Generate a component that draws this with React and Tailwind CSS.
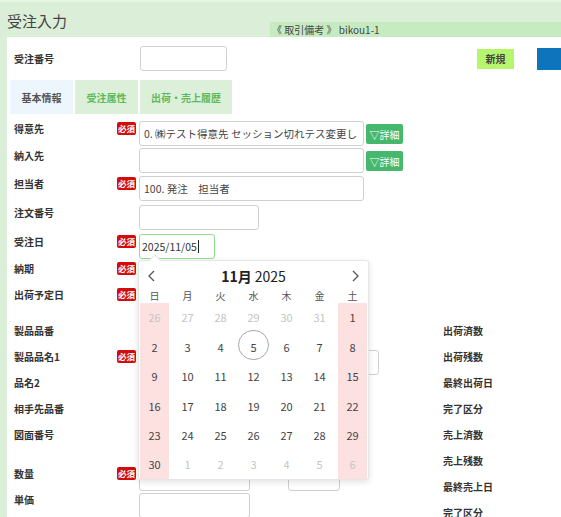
import React from "react";

const FONT = "[font-family:'Noto_Sans_CJK_JP','Noto_Sans',sans-serif]";

const weeks = [
  [26, 27, 28, 29, 30, 31, 1],
  [2, 3, 4, 5, 6, 7, 8],
  [9, 10, 11, 12, 13, 14, 15],
  [16, 17, 18, 19, 20, 21, 22],
  [23, 24, 25, 26, 27, 28, 29],
  [30, 1, 2, 3, 4, 5, 6],
];

function Badge() {
  return (
    <span className="mt-[1px] flex h-[13px] w-[19px] items-center justify-center rounded-[2px] bg-[#d30b0b] text-[8.5px] font-bold leading-none text-white">
      必須
    </span>
  );
}

function Label({ children }) {
  return <div className="text-[10px] font-bold leading-[16px] text-[#333]">{children}</div>;
}

function Row({ label, req, h, children }) {
  return (
    <div className={`flex items-start pl-[7px] ${h}`}>
      <div className="w-[103px] shrink-0">
        <Label>{label}</Label>
      </div>
      <div className="w-[22px] shrink-0">{req && <Badge />}</div>
      {children}
    </div>
  );
}

function Input({ w, value, className = "" }) {
  return (
    <div
      className={`flex h-[25px] shrink-0 items-center overflow-hidden whitespace-nowrap rounded-[3px] border border-[#d0d0d0] bg-white px-[4px] text-[10.5px] text-[#444] ${w} ${className}`}
    >
      {value}
    </div>
  );
}

function DetailButton() {
  return (
    <button className="ml-[2px] mt-[3px] flex h-[20px] w-[37px] items-center justify-center rounded-[2px] bg-[#45b86e] text-[10px] text-white">
      ▽詳細
    </button>
  );
}

function Chevron({ dir }) {
  return (
    <svg width="10" height="12" viewBox="0 0 10 12" fill="none" stroke="#555" strokeWidth="1.3">
      {dir === "left" ? <polyline points="7,1 2,6 7,11" /> : <polyline points="3,1 8,6 3,11" />}
    </svg>
  );
}

function Calendar() {
  return (
    <div className="absolute left-[-1px] top-[26px] z-10 w-[231px] rounded-[3px] border border-[#e6e6e6] bg-white pt-[4px] shadow-[0_2px_6px_rgba(0,0,0,0.12)]">
      <div className="absolute left-[12px] top-[-5px] h-[8px] w-[8px] rotate-45 border-l border-t border-[#e6e6e6] bg-white" />
      <div className="flex h-[22px] items-center justify-between px-[8px]">
        <Chevron dir="left" />
        <div className="text-[14px] leading-none text-[#222]">
          <span className="font-bold">11月</span> 2025
        </div>
        <Chevron dir="right" />
      </div>
      <div className="grid h-[16px] grid-cols-[repeat(7,29px)] gap-x-[4px] pl-[1px] text-[10px] text-[#555]">
        {["日", "月", "火", "水", "木", "金", "土"].map((d) => (
          <div key={d} className="flex items-center justify-center">
            {d}
          </div>
        ))}
      </div>
      <div className="grid grid-cols-[repeat(7,29px)] gap-x-[4px] pl-[1px]">
        {weeks.map((week, wi) =>
          week.map((d, di) => {
            const other = (wi === 0 && di < 6) || (wi === 5 && di > 0);
            const weekend = di === 0 || di === 6;
            const today = wi === 1 && di === 3;
            return (
              <div
                key={`${wi}-${di}`}
                className={`relative flex h-[29.4px] items-center justify-center text-[11px] ${
                  weekend ? "bg-[#fde1e1]" : ""
                } ${other ? "text-[#c4c4c4]" : "text-[#444]"}`}
              >
                {today && (
                  <span className="absolute left-[-1.5px] top-[-2px] h-[30px] w-[31px] rounded-full border border-[#a8a8a8]" />
                )}
                <span className="relative">{d}</span>
              </div>
            );
          })
        )}
      </div>
    </div>
  );
}

const rightLabels = ["出荷済数", "出荷残数", "最終出荷日", "完了区分", "売上済数", "売上残数", "最終売上日", "完了区分"];

export default function App() {
  return (
    <div className={`h-[517px] w-[561px] overflow-hidden bg-[#dbefd8] ${FONT}`}>
      <div className="flex h-[37px] items-end border-t-2 border-[#e7f5e5]">
        <div className="w-[270px] shrink-0 self-start pl-[7px] pt-[9px] text-[15px] leading-[20px] text-[#444]">
          受注入力
        </div>
        <div className="flex h-[15px] flex-1 items-center bg-[#c7ebc1] pl-[2px] text-[10px] text-[#444]">
          《 取引備考 》 bikou1-1
        </div>
      </div>

      <div className="ml-[7px] h-[480px] w-[600px] bg-white pt-[9px]">
        <div className="flex h-[25px] items-center pl-[7px]">
          <div className="w-[126px] shrink-0 text-[10px] font-bold text-[#333]">受注番号</div>
          <Input w="w-[87px]" />
          <button className="ml-[250px] h-[20px] w-[37px] shrink-0 bg-[#b6f66c] text-[10px] font-bold text-[#444]">
            新規
          </button>
          <button className="ml-[23px] h-[22px] w-[40px] shrink-0 bg-[#0e74bc]" />
        </div>

        <div className="mt-[9px] flex h-[34px] gap-[2px] pl-[3px] text-[10px] font-bold">
          <div className="flex w-[63px] items-center justify-center bg-[#eef6fd] text-[#555]">基本情報</div>
          <div className="flex w-[63px] items-center justify-center bg-[#dcefd8] text-[#5cba5c]">受注属性</div>
          <div className="flex w-[92px] items-center justify-center bg-[#dcefd8] text-[#5cba5c]">出荷・売上履歴</div>
        </div>

        <div className="mt-[7px]">
          <Row label="得意先" req h="h-[27px]">
            <Input w="w-[225px]" value="0. ㈱テスト得意先 セッション切れテス変更し" />
            <DetailButton />
          </Row>
          <Row label="納入先" h="h-[28px]">
            <Input w="w-[225px]" />
            <DetailButton />
          </Row>
          <Row label="担当者" req h="h-[29px]">
            <Input w="w-[225px]" value="100. 発注　担当者" className="h-[24px]" />
          </Row>
          <Row label="注文番号" h="h-[29px]">
            <Input w="w-[120px]" />
          </Row>
          <Row label="受注日" req h="h-[27px]">
            <div className="relative">
              <div className="flex h-[25px] w-[76px] items-center rounded-[3px] border-[1.5px] border-[#8fdb8f] bg-white px-[2px] text-[10.5px] text-[#333]">
                2025/11/05
                <span className="ml-[1px] h-[13px] w-[1px] bg-[#222]" />
              </div>
              <Calendar />
            </div>
          </Row>
          <Row label="納期" req h="h-[26px]" />
          <Row label="出荷予定日" req h="h-[26px]" />
        </div>

        <div className="mt-[10px] flex">
          <div className="w-[436px] shrink-0">
            <Row label="製品品番" h="h-[26px]">
              <Input w="w-[110px]" />
            </Row>
            <Row label="製品品名1" req h="h-[26px]">
              <Input w="w-[240px]" className="mt-[1px]" />
            </Row>
            <Row label="品名2" h="h-[26px]">
              <Input w="w-[200px]" className="mt-[2px]" />
            </Row>
            <Row label="相手先品番" h="h-[26px]">
              <Input w="w-[110px]" />
            </Row>
            <Row label="図面番号" h="h-[39px]">
              <Input w="w-[110px]" />
            </Row>
            <Row label="数量" req h="h-[26px]">
              <Input w="w-[111px]" />
              <Input w="w-[52px]" className="ml-[38px]" />
            </Row>
            <Row label="単価" h="h-[26px]">
              <Input w="w-[111px]" className="mt-[1px]" />
            </Row>
          </div>
          <div>
            {rightLabels.map((l, i) => (
              <div key={i} className="h-[26px]">
                <Label>{l}</Label>
              </div>
            ))}
          </div>
        </div>
      </div>
    </div>
  );
}
